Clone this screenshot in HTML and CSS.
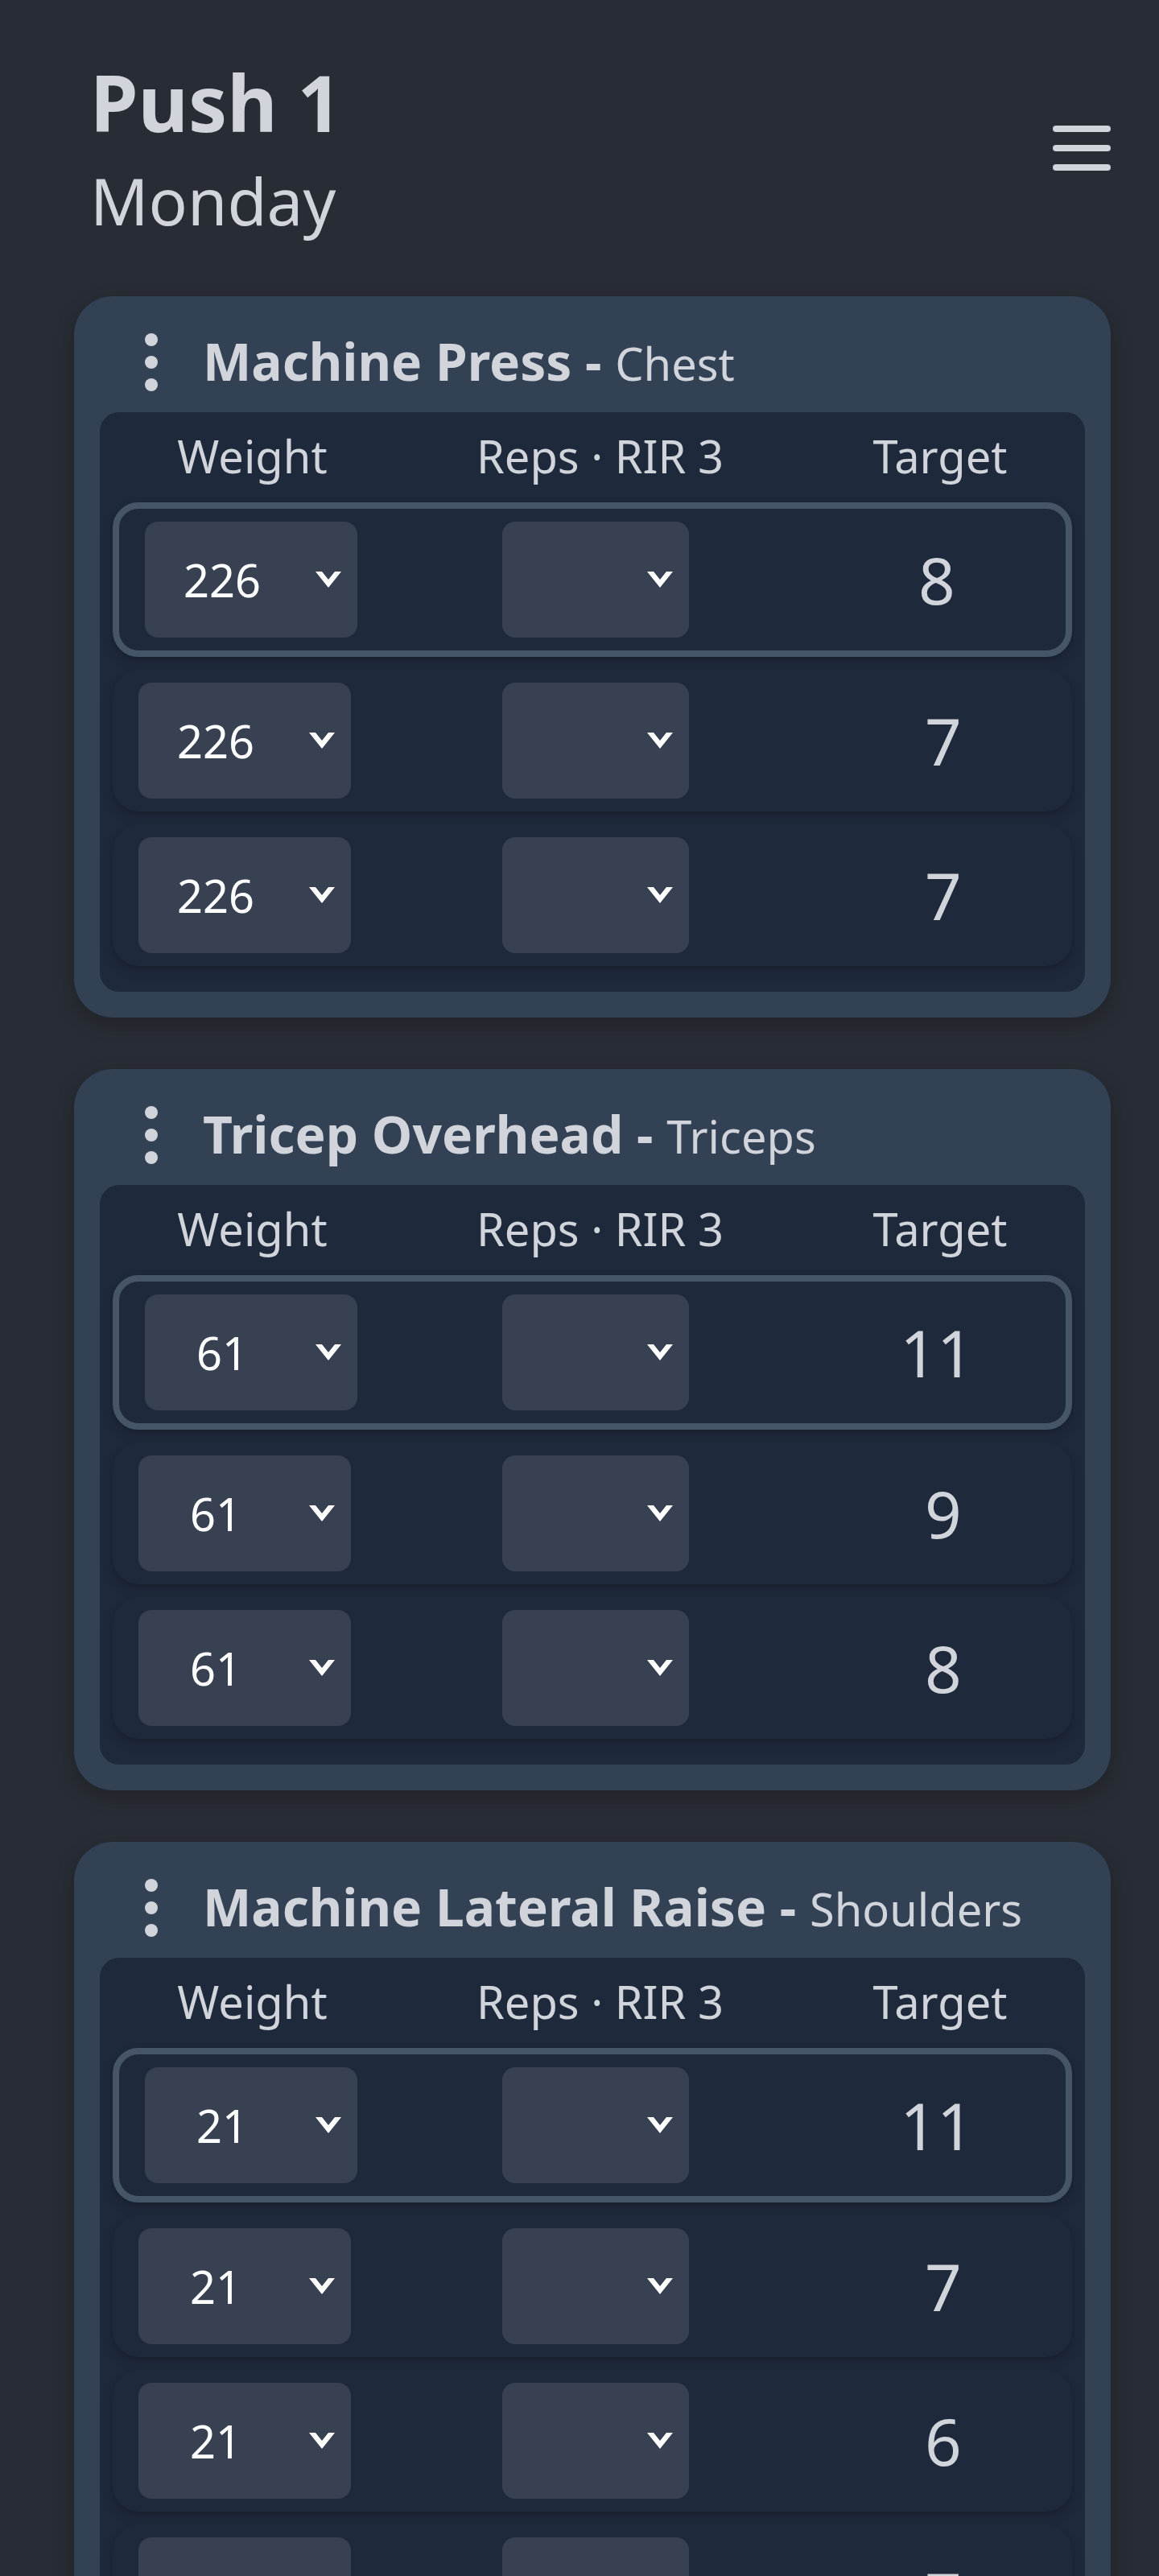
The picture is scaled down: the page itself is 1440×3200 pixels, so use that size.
FILE: index.html
```html
<!DOCTYPE html>
<html lang="en">
<head>
<meta charset="utf-8">
<title>Push 1 - Monday</title>
<link rel="stylesheet" href="styles.css">
</head>
<body>
<div class="page">
  <header class="top">
    <div class="day">
      <h1 class="day-title">Push 1</h1>
      <div class="day-name">Monday</div>
    </div>
    <button class="menu" aria-label="Menu">
      <svg width="72" height="56" viewBox="0 0 72 56"><g stroke="#d1d5db" stroke-width="8" stroke-linecap="round"><line x1="4" y1="4" x2="68" y2="4"/><line x1="4" y1="28" x2="68" y2="28"/><line x1="4" y1="52" x2="68" y2="52"/></g></svg>
    </button>
  </header>

  <section class="card">
    <div class="card-head">
      <svg class="dots" width="64" height="80" viewBox="0 0 64 80"><g fill="#d1d5db"><circle cx="32" cy="12" r="8"/><circle cx="32" cy="40" r="8"/><circle cx="32" cy="68" r="8"/></g></svg>
      <h2 class="ex-title"><span class="ex-name">Machine Press -</span> <span class="ex-muscle">Chest</span></h2>
    </div>
    <div class="sets">
      <div class="sets-head"><span>Weight</span><span>Reps · RIR 3</span><span>Target</span></div>
      <div class="set current">
        <div class="sel sel-weight"><span class="sel-val">226</span><svg class="chev" width="32" height="20" viewBox="0 0 32 20"><polygon points="0,0 8,0 16,10 24,0 32,0 16,20" fill="#fff"/></svg></div>
        <div class="sel sel-reps"><span class="sel-val"></span><svg class="chev" width="32" height="20" viewBox="0 0 32 20"><polygon points="0,0 8,0 16,10 24,0 32,0 16,20" fill="#fff"/></svg></div>
        <div class="target">8</div>
      </div>
      <div class="set">
        <div class="sel sel-weight"><span class="sel-val">226</span><svg class="chev" width="32" height="20" viewBox="0 0 32 20"><polygon points="0,0 8,0 16,10 24,0 32,0 16,20" fill="#fff"/></svg></div>
        <div class="sel sel-reps"><span class="sel-val"></span><svg class="chev" width="32" height="20" viewBox="0 0 32 20"><polygon points="0,0 8,0 16,10 24,0 32,0 16,20" fill="#fff"/></svg></div>
        <div class="target">7</div>
      </div>
      <div class="set">
        <div class="sel sel-weight"><span class="sel-val">226</span><svg class="chev" width="32" height="20" viewBox="0 0 32 20"><polygon points="0,0 8,0 16,10 24,0 32,0 16,20" fill="#fff"/></svg></div>
        <div class="sel sel-reps"><span class="sel-val"></span><svg class="chev" width="32" height="20" viewBox="0 0 32 20"><polygon points="0,0 8,0 16,10 24,0 32,0 16,20" fill="#fff"/></svg></div>
        <div class="target">7</div>
      </div>
    </div>
  </section>

  <section class="card">
    <div class="card-head">
      <svg class="dots" width="64" height="80" viewBox="0 0 64 80"><g fill="#d1d5db"><circle cx="32" cy="12" r="8"/><circle cx="32" cy="40" r="8"/><circle cx="32" cy="68" r="8"/></g></svg>
      <h2 class="ex-title"><span class="ex-name">Tricep Overhead -</span> <span class="ex-muscle">Triceps</span></h2>
    </div>
    <div class="sets">
      <div class="sets-head"><span>Weight</span><span>Reps · RIR 3</span><span>Target</span></div>
      <div class="set current">
        <div class="sel sel-weight"><span class="sel-val">61</span><svg class="chev" width="32" height="20" viewBox="0 0 32 20"><polygon points="0,0 8,0 16,10 24,0 32,0 16,20" fill="#fff"/></svg></div>
        <div class="sel sel-reps"><span class="sel-val"></span><svg class="chev" width="32" height="20" viewBox="0 0 32 20"><polygon points="0,0 8,0 16,10 24,0 32,0 16,20" fill="#fff"/></svg></div>
        <div class="target">11</div>
      </div>
      <div class="set">
        <div class="sel sel-weight"><span class="sel-val">61</span><svg class="chev" width="32" height="20" viewBox="0 0 32 20"><polygon points="0,0 8,0 16,10 24,0 32,0 16,20" fill="#fff"/></svg></div>
        <div class="sel sel-reps"><span class="sel-val"></span><svg class="chev" width="32" height="20" viewBox="0 0 32 20"><polygon points="0,0 8,0 16,10 24,0 32,0 16,20" fill="#fff"/></svg></div>
        <div class="target">9</div>
      </div>
      <div class="set">
        <div class="sel sel-weight"><span class="sel-val">61</span><svg class="chev" width="32" height="20" viewBox="0 0 32 20"><polygon points="0,0 8,0 16,10 24,0 32,0 16,20" fill="#fff"/></svg></div>
        <div class="sel sel-reps"><span class="sel-val"></span><svg class="chev" width="32" height="20" viewBox="0 0 32 20"><polygon points="0,0 8,0 16,10 24,0 32,0 16,20" fill="#fff"/></svg></div>
        <div class="target">8</div>
      </div>
    </div>
  </section>

  <section class="card">
    <div class="card-head">
      <svg class="dots" width="64" height="80" viewBox="0 0 64 80"><g fill="#d1d5db"><circle cx="32" cy="12" r="8"/><circle cx="32" cy="40" r="8"/><circle cx="32" cy="68" r="8"/></g></svg>
      <h2 class="ex-title"><span class="ex-name">Machine Lateral Raise -</span> <span class="ex-muscle">Shoulders</span></h2>
    </div>
    <div class="sets">
      <div class="sets-head"><span>Weight</span><span>Reps · RIR 3</span><span>Target</span></div>
      <div class="set current">
        <div class="sel sel-weight"><span class="sel-val">21</span><svg class="chev" width="32" height="20" viewBox="0 0 32 20"><polygon points="0,0 8,0 16,10 24,0 32,0 16,20" fill="#fff"/></svg></div>
        <div class="sel sel-reps"><span class="sel-val"></span><svg class="chev" width="32" height="20" viewBox="0 0 32 20"><polygon points="0,0 8,0 16,10 24,0 32,0 16,20" fill="#fff"/></svg></div>
        <div class="target">11</div>
      </div>
      <div class="set">
        <div class="sel sel-weight"><span class="sel-val">21</span><svg class="chev" width="32" height="20" viewBox="0 0 32 20"><polygon points="0,0 8,0 16,10 24,0 32,0 16,20" fill="#fff"/></svg></div>
        <div class="sel sel-reps"><span class="sel-val"></span><svg class="chev" width="32" height="20" viewBox="0 0 32 20"><polygon points="0,0 8,0 16,10 24,0 32,0 16,20" fill="#fff"/></svg></div>
        <div class="target">7</div>
      </div>
      <div class="set">
        <div class="sel sel-weight"><span class="sel-val">21</span><svg class="chev" width="32" height="20" viewBox="0 0 32 20"><polygon points="0,0 8,0 16,10 24,0 32,0 16,20" fill="#fff"/></svg></div>
        <div class="sel sel-reps"><span class="sel-val"></span><svg class="chev" width="32" height="20" viewBox="0 0 32 20"><polygon points="0,0 8,0 16,10 24,0 32,0 16,20" fill="#fff"/></svg></div>
        <div class="target">6</div>
      </div>
      <div class="set">
        <div class="sel sel-weight"><span class="sel-val">21</span><svg class="chev" width="32" height="20" viewBox="0 0 32 20"><polygon points="0,0 8,0 16,10 24,0 32,0 16,20" fill="#fff"/></svg></div>
        <div class="sel sel-reps"><span class="sel-val"></span><svg class="chev" width="32" height="20" viewBox="0 0 32 20"><polygon points="0,0 8,0 16,10 24,0 32,0 16,20" fill="#fff"/></svg></div>
        <div class="target">7</div>
      </div>
    </div>
  </section>
</div>
</body>
</html>
```

FILE: styles.css
```css
html, body {
  margin: 0;
  padding: 0;
  background: #282c34;
}

body {
  font-family: "Noto Sans", "Open Sans", sans-serif;
  color: #d1d5db;
}

.page {
  padding: 0 60px 64px 92px;
}

.top {
  display: flex;
  align-items: center;
  justify-content: space-between;
  padding: 79px 0 79px 20px;
}

.day-title {
  margin: 0;
  font-size: 96px;
  line-height: 96px;
  font-weight: 700;
}

.day-name {
  margin-top: 34px;
  font-size: 80px;
  line-height: 80px;
  font-weight: 400;
}

.menu {
  background: none;
  border: 0;
  padding: 0;
  margin: 0;
  display: block;
  line-height: 0;
}

.card {
  background: #334155;
  border-radius: 48px;
  padding: 34px 32px 32px;
  margin-bottom: 64px;
  box-shadow: 0 8px 24px rgba(0, 0, 0, 0.22);
}

.card-head {
  display: flex;
  align-items: center;
  height: 96px;
  margin-bottom: 14px;
  padding-left: 32px;
}

.dots {
  display: block;
  flex: none;
  margin-right: 32px;
}

.ex-title {
  margin: 0;
  font-size: 64px;
  line-height: 96px;
  white-space: nowrap;
}

.ex-name {
  font-weight: 700;
}

.ex-muscle {
  font-weight: 400;
  font-size: 56px;
}

.sets {
  background: #1e293b;
  border-radius: 24px;
  padding: 0 16px 32px;
  display: flex;
  flex-direction: column;
  gap: 16px;
}

.sets-head {
  display: grid;
  grid-template-columns: 347px 517px 328px;
  padding: 12px 0 0;
  font-size: 56px;
  line-height: 84px;
  text-align: center;
  white-space: nowrap;
}

.set {
  display: flex;
  align-items: center;
  justify-content: space-between;
  background: #1e293b;
  border-radius: 32px;
  padding: 16px 32px;
  box-shadow: 0 6px 14px rgba(0, 0, 0, 0.16), 0 2px 4px rgba(0, 0, 0, 0.08);
}

.set.current {
  border: 8px solid #475569;
}

.sel {
  display: flex;
  align-items: center;
  height: 144px;
  box-sizing: border-box;
  padding: 0 20px 0 24px;
  background: #374151;
  border-radius: 16px;
  color: #ffffff;
  font-size: 56px;
}

.sel-weight {
  width: 264px;
}

.sel-reps {
  width: 232px;
}

.sel-val {
  flex: 1;
  text-align: center;
}

.chev {
  display: block;
  flex: none;
  margin-left: 44px;
}

.target {
  width: 256px;
  text-align: center;
  font-size: 80px;
  line-height: 1;
}
```
